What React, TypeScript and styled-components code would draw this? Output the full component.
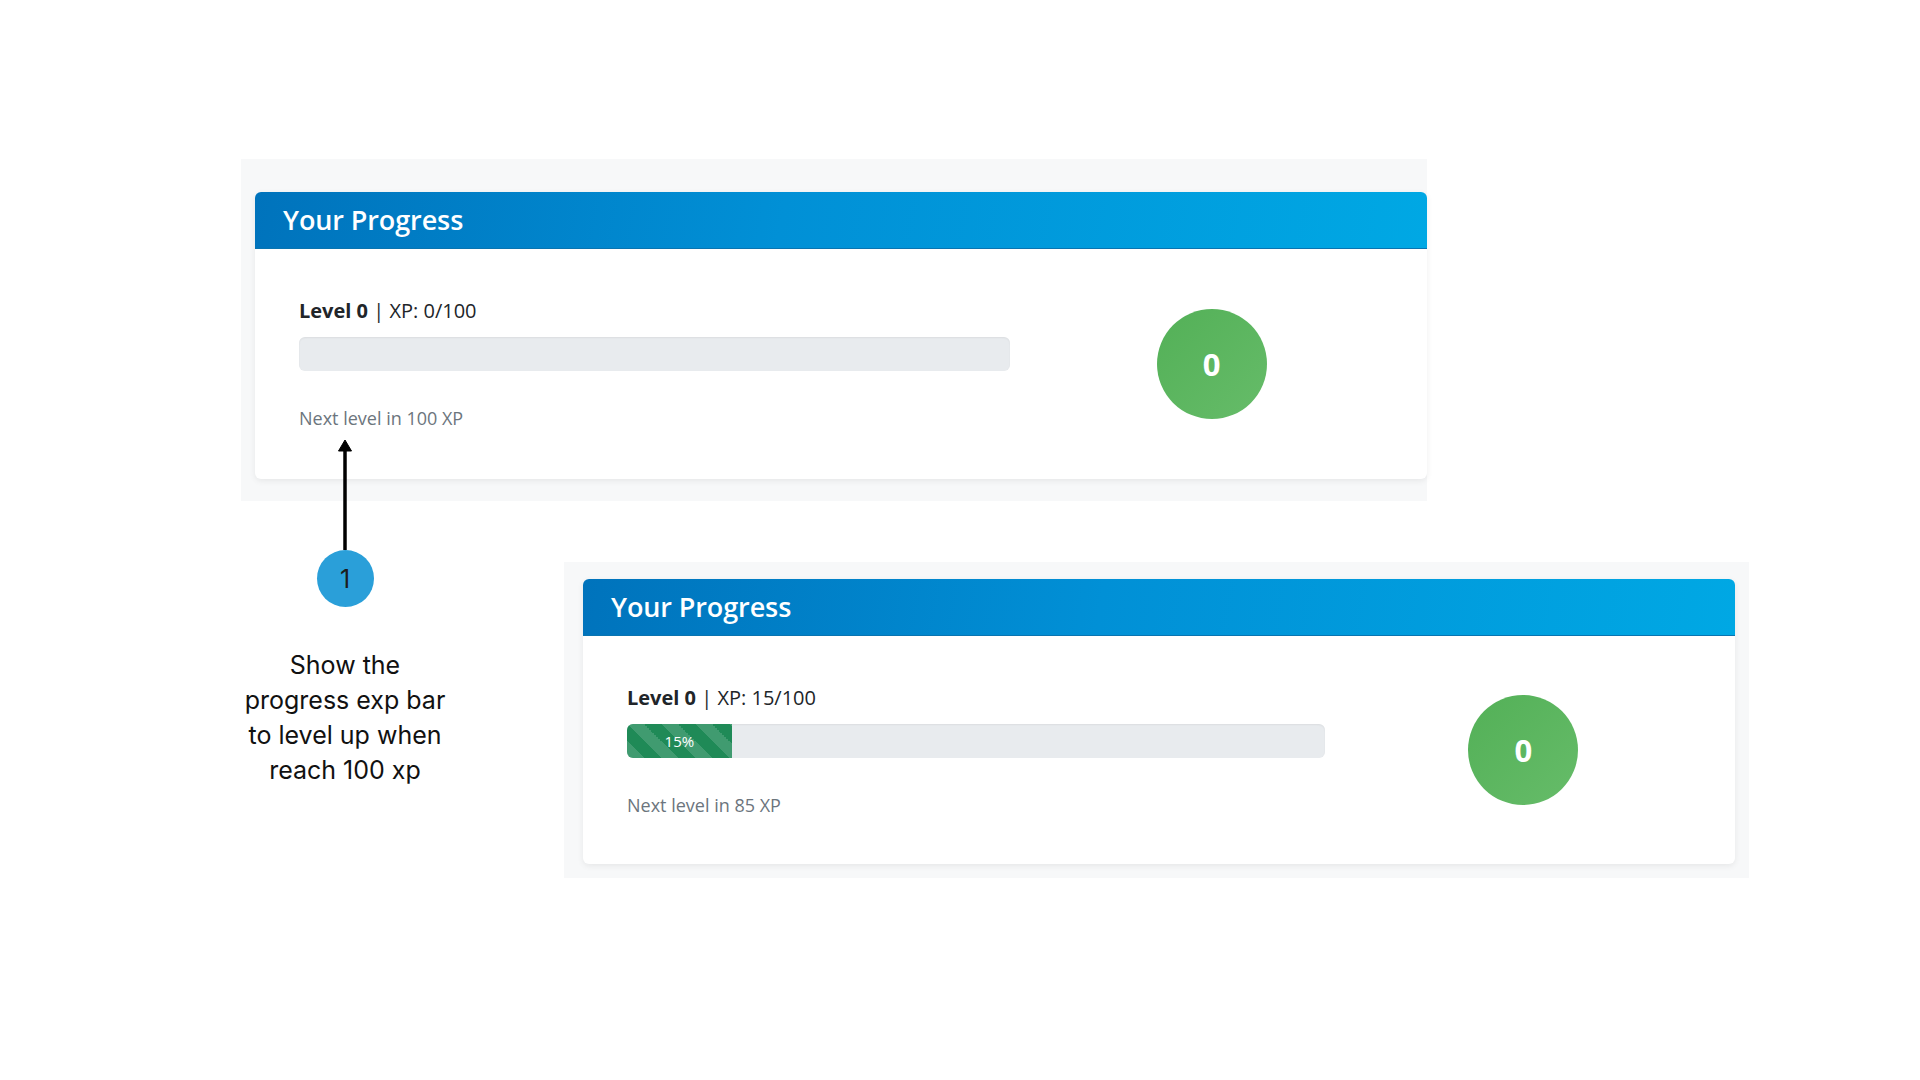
import React from 'react'
import styled, { createGlobalStyle } from 'styled-components'

const GlobalStyle = createGlobalStyle`
  html, body {
    margin: 0;
    padding: 0;
    background: #ffffff;
  }
  * {
    box-sizing: border-box;
  }
`

const Slide = styled.div`
  width: 1920px;
  height: 1080px;
  padding-top: 159px;
  background: #ffffff;
  overflow: hidden;
  font-family: 'Open Sans', 'Liberation Sans', sans-serif;
`

const TopRow = styled.div`
  padding-left: 241px;
`

const BottomRow = styled.div`
  display: flex;
  align-items: flex-start;
  padding-left: 225px;
`

// grey backdrop the panel sits on
const Backdrop = styled.div<{ $width: number; $pad: string; $offset?: string }>`
  width: ${p => p.$width}px;
  padding: ${p => p.$pad};
  margin: ${p => p.$offset || '0'};
  background: #f7f8f9;
`

const Card = styled.div`
  background: #ffffff;
  border-radius: 6px;
  overflow: hidden;
  box-shadow: 0 2px 6px rgba(0, 0, 0, 0.07);
`

const CardHeader = styled.div`
  height: 57px;
  display: flex;
  align-items: center;
  padding-left: 28px;
  background: linear-gradient(100deg, #0073bc 0%, #0190d6 45%, #00a8e4 100%);
  border-bottom: 1px solid #0a74b0;
`

const CardTitle = styled.h3`
  margin: 0 0 2px;
  font-size: 27px;
  font-weight: 600;
  color: #ffffff;
  letter-spacing: -0.1px;
`

const CardBody = styled.div`
  display: grid;
  grid-template-columns: 63% 35.8%;
  padding-left: 44px;
`

const ProgressColumn = styled.div<{ $tight?: boolean }>`
  padding: ${p => (p.$tight ? '48px 0 47px' : '48px 0 49px')};
`

const LevelLine = styled.div`
  font-size: 20px;
  line-height: 27px;
  color: #212529;

  strong {
    font-weight: 700;
  }
`

const Track = styled.div`
  margin-top: 13px;
  height: 34px;
  border-radius: 6px;
  background: #e8ebee;
  box-shadow: inset 0 1px 2px rgba(0, 0, 0, 0.06);
  overflow: hidden;
  display: flex;
`

const Fill = styled.div`
  height: 100%;
  display: flex;
  align-items: center;
  justify-content: center;
  font-size: 15px;
  color: #ffffff;
  background-color: #1f8a57;
  background-image: linear-gradient(
    45deg,
    rgba(255, 255, 255, 0.15) 25%,
    transparent 25%,
    transparent 50%,
    rgba(255, 255, 255, 0.15) 50%,
    rgba(255, 255, 255, 0.15) 75%,
    transparent 75%,
    transparent
  );
  background-size: 34px 34px;
`

const NextLevel = styled.div`
  margin-top: 35px;
  font-size: 18px;
  line-height: 24px;
  color: #6c757d;
`

const BadgeColumn = styled.div`
  display: flex;
  align-items: center;
  justify-content: center;
`

const LevelBadge = styled.div`
  width: 110px;
  height: 110px;
  border-radius: 50%;
  display: flex;
  align-items: center;
  justify-content: center;
  background: linear-gradient(135deg, #53b057 0%, #66bc69 100%);
  color: #ffffff;
  font-size: 31px;
  font-weight: 700;
`

const Annotation = styled.div`
  width: 240px;
  margin-top: -61px;
  display: flex;
  flex-direction: column;
  align-items: center;
`

const StepBadge = styled.div`
  width: 57px;
  height: 57px;
  border-radius: 50%;
  background: #2a9fd9;
  display: flex;
  align-items: center;
  justify-content: center;
  font-family: 'Inter', 'Liberation Sans', sans-serif;
  font-size: 25px;
  color: #1c1c1c;
`

const Caption = styled.p`
  margin: 41px 0 0;
  text-align: center;
  font-family: 'Inter', 'Liberation Sans', sans-serif;
  font-size: 25px;
  line-height: 35px;
  color: #111111;
  white-space: nowrap;
`

type ProgressCardProps = {
  level: number
  xp: number
  maxXp: number
  tight?: boolean
}

function ProgressCard({ level, xp, maxXp, tight }: ProgressCardProps) {
  const pct = Math.round((xp / maxXp) * 100)

  return (
    <Card>
      <CardHeader>
        <CardTitle>Your Progress</CardTitle>
      </CardHeader>
      <CardBody>
        <ProgressColumn $tight={tight}>
          <LevelLine>
            <strong>Level {level}</strong> | XP: {xp}/{maxXp}
          </LevelLine>
          <Track>
            {pct > 0 && <Fill style={{ width: `${pct}%` }}>{pct}%</Fill>}
          </Track>
          <NextLevel>Next level in {maxXp - xp} XP</NextLevel>
        </ProgressColumn>
        <BadgeColumn>
          <LevelBadge>{level}</LevelBadge>
        </BadgeColumn>
      </CardBody>
    </Card>
  )
}

function UpArrow() {
  return (
    <svg width="20" height="110" viewBox="0 0 20 110">
      <line x1="10" y1="9" x2="10" y2="110" stroke="#000" strokeWidth="3.5" />
      <path d="M10 0 L16.5 11 L3.5 11 Z" fill="#000" strokeLinejoin="round" stroke="#000" strokeWidth="1" />
    </svg>
  )
}

export default function App() {
  return (
    <>
      <GlobalStyle />
      <Slide>
        <TopRow>
          <Backdrop $width={1186} $pad="33px 0 22px 14px">
            <ProgressCard level={0} xp={0} maxXp={100} />
          </Backdrop>
        </TopRow>
        <BottomRow>
          <Annotation>
            <UpArrow />
            <StepBadge>1</StepBadge>
            <Caption>
              Show the
              <br />
              progress exp bar
              <br />
              to level up when
              <br />
              reach 100 xp
            </Caption>
          </Annotation>
          <Backdrop $width={1185} $pad="17px 14px 14px 19px" $offset="61px 0 0 99px">
            <ProgressCard level={0} xp={15} maxXp={100} tight />
          </Backdrop>
        </BottomRow>
      </Slide>
    </>
  )
}
